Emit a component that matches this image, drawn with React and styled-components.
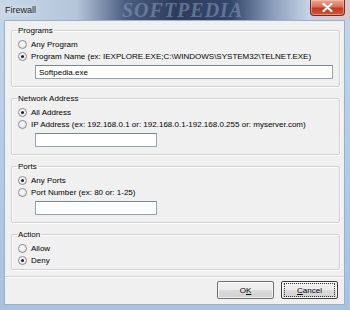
import styled, { createGlobalStyle } from 'styled-components';

const GlobalStyle = createGlobalStyle`
  body {
    margin: 0;
    font-family: "Liberation Sans", Arial, sans-serif;
    font-size: 8px;
    color: #000;
  }
`;

function Radio({ checked, children }) {
  return (
    <RadioRow>
      <RadioDot checked={checked} />
      <span>{children}</span>
    </RadioRow>
  );
}

export default function App() {
  return (
    <>
      <GlobalStyle />
      <Window>
        <TitleBar>
          <Title>Firewall</Title>
          <Watermark>SOFTPEDIA</Watermark>
          <CloseButton>
            <svg width="11" height="9" viewBox="0 0 11 9">
              <path d="M1.5 1 L9.5 8 M9.5 1 L1.5 8" stroke="#fff" strokeWidth="2.2" strokeLinecap="round" />
            </svg>
          </CloseButton>
        </TitleBar>

        <Client>
          <Group>
            <Legend>Programs</Legend>
            <Radio>Any Program</Radio>
            <Radio checked>Program Name (ex: IEXPLORE.EXE;C:\WINDOWS\SYSTEM32\TELNET.EXE)</Radio>
            <TextBox width={298} defaultValue="Softpedia.exe" />
          </Group>

          <Group>
            <Legend>Network Address</Legend>
            <Radio checked>All Address</Radio>
            <Radio>IP Address (ex: 192.168.0.1 or: 192.168.0.1-192.168.0.255 or: myserver.com)</Radio>
            <TextBox width={122} defaultValue="" />
          </Group>

          <Group>
            <Legend>Ports</Legend>
            <Radio checked>Any Ports</Radio>
            <Radio>Port Number (ex: 80 or: 1-25)</Radio>
            <TextBox width={122} defaultValue="" />
          </Group>

          <Group bottom={3}>
            <Legend>Action</Legend>
            <Radio>Allow</Radio>
            <Radio checked>Deny</Radio>
          </Group>

          <Footer>
            <Button>O<u>K</u></Button>
            <Button isDefault>
              <Focus><u>C</u>ancel</Focus>
            </Button>
          </Footer>
        </Client>
      </Window>
    </>
  );
}

const Window = styled.div`
  width: 350px;
  height: 310px;
  box-sizing: border-box;
  display: flex;
  flex-direction: column;
  background: linear-gradient(180deg, #c4d6ea 0%, #b1c9e4 60%, #a7c1df 100%);
  overflow: hidden;
`;

const TitleBar = styled.div`
  position: relative;
  height: 20px;
  flex: none;
  display: flex;
  align-items: center;
  padding-left: 5px;
  background: linear-gradient(
    90deg,
    #c9d7e7 0%,
    #b4c5da 22%,
    #4a5d80 36%,
    #2d3c5b 50%,
    #34466a 66%,
    #8a9dbb 78%,
    #c3d2e4 88%,
    #d9c9cb 100%
  );
`;

const Title = styled.span`
  font-size: 9px;
  color: #1a1a1a;
  text-shadow: 0 0 6px rgba(255, 255, 255, 0.9);
`;

const Watermark = styled.span`
  position: absolute;
  left: 122px;
  top: 0;
  font-family: "Liberation Serif", serif;
  font-weight: bold;
  font-style: italic;
  font-size: 20px;
  line-height: 20px;
  letter-spacing: 1px;
  color: rgba(140, 160, 195, 0.55);
`;

const CloseButton = styled.div`
  position: absolute;
  right: 5px;
  top: 0;
  width: 35px;
  height: 16px;
  box-sizing: border-box;
  display: flex;
  align-items: center;
  justify-content: center;
  border: 1px solid #7a2a1c;
  border-top: none;
  border-radius: 0 0 4px 4px;
  background: linear-gradient(180deg, #e9a796 0%, #d7705a 45%, #c13a22 55%, #d0583b 100%);
  box-shadow: inset 0 0 0 1px rgba(255, 200, 190, 0.5);
`;

const Client = styled.div`
  flex: 1;
  margin: 0 5px 5px 4px;
  display: flex;
  flex-direction: column;
  gap: 7px;
  padding: 5px 4px 0 6px;
  background: #f0f0f0;
  border: 1px solid #9db0c8;
`;

const Group = styled.fieldset`
  margin: 0;
  padding: 3px 0 ${({ bottom }) => bottom ?? 7}px 0;
  min-width: 0;
  border: 1px solid #d0d0d0;
  border-radius: 2px;
  box-shadow: inset 1px 1px #fff, 1px 1px #fff;
`;

const Legend = styled.legend`
  margin-left: 5px;
  padding: 0 1px;
  font-size: 8px;
  line-height: 9px;
`;

const RadioRow = styled.div`
  display: flex;
  align-items: center;
  gap: 4px;
  height: 12px;
  padding-left: 6px;
  white-space: nowrap;
`;

const RadioDot = styled.span`
  position: relative;
  width: 9px;
  height: 9px;
  box-sizing: border-box;
  border-radius: 50%;
  border: 1px solid #8b8b8b;
  background: radial-gradient(circle at 35% 35%, #ffffff 0%, #e8e8e8 70%, #d4d4d4 100%);

  &::after {
    content: "";
    display: ${({ checked }) => (checked ? 'block' : 'none')};
    position: absolute;
    left: 2px;
    top: 2px;
    width: 3px;
    height: 3px;
    border-radius: 50%;
    background: #1b1b1b;
  }
`;

const TextBox = styled.input`
  display: block;
  width: ${({ width }) => width}px;
  height: 14px;
  box-sizing: border-box;
  margin: 3px 0 0 23px;
  padding: 0 3px;
  border: 1px solid #9aa0a8;
  border-top-color: #7e848c;
  background: #fff;
  font-family: "Liberation Sans", Arial, sans-serif;
  font-size: 8px;
  color: #000;
  outline: none;
`;

const Footer = styled.div`
  margin: -1px -4px 0 -6px;
  padding: 4px 6px 0 0;
  border-top: 1px solid #d4d4d4;
  box-shadow: inset 0 1px #fff;
  display: flex;
  justify-content: flex-end;
  gap: 7px;
`;

const Button = styled.div`
  width: 57px;
  height: 18px;
  box-sizing: border-box;
  display: flex;
  align-items: center;
  justify-content: center;
  border: 1px solid ${({ isDefault }) => (isDefault ? '#3c3c3c' : '#707070')};
  border-radius: 2px;
  background: linear-gradient(180deg, #f2f2f2 0%, #ebebeb 49%, #dddddd 50%, #cfcfcf 100%);
  box-shadow: inset 0 0 0 1px rgba(255, 255, 255, 0.7);
  font-size: 8px;
`;

const Focus = styled.span`
  display: flex;
  align-items: center;
  justify-content: center;
  width: 49px;
  height: 12px;
  border: 1px dotted #333;
`;
